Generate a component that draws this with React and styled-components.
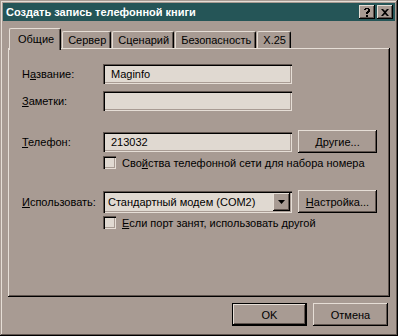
import React from 'react'
import styled, { createGlobalStyle, css } from 'styled-components'

const FACE = '#a89b93'
const LIGHT = '#e6ded6'
const SHADOW = '#5f544e'
const FIELD = '#e0d9d1'

const Global = createGlobalStyle`
  html, body {
    margin: 0;
    padding: 0;
    background: ${FACE};
  }
  body {
    font-family: "Liberation Sans", Arial, sans-serif;
    font-size: 11px;
    color: #000;
  }
`

const raised = css`
  box-shadow: inset -1px -1px #000, inset 1px 1px ${LIGHT},
    inset -2px -2px ${SHADOW}, inset 2px 2px ${FACE};
`

const sunken = css`
  box-shadow: inset 1px 1px ${SHADOW}, inset 2px 2px #000,
    inset -1px -1px ${LIGHT}, inset -2px -2px ${FACE};
`

const Window = styled.div`
  width: 398px;
  height: 336px;
  box-sizing: border-box;
  padding: 3px;
  background: ${FACE};
  box-shadow: inset -1px -1px #000, inset 1px 1px ${FACE},
    inset -2px -2px ${SHADOW}, inset 2px 2px ${LIGHT};
  display: flex;
  flex-direction: column;
`

const TitleBar = styled.div`
  height: 18px;
  background: #255557;
  display: flex;
  align-items: center;
  padding: 0 2px 0 3px;
  color: #fff;
  font-weight: bold;
  font-size: 11px;
`

const Title = styled.div`
  flex: 1;
`

const CapButton = styled.div`
  width: 16px;
  height: 14px;
  box-sizing: border-box;
  ${raised};
  background: ${FACE};
  color: #000;
  display: flex;
  align-items: center;
  justify-content: center;
  margin-left: ${(p) => (p.$gap ? '2px' : '0')};
`

const Body = styled.div`
  flex: 1;
  display: flex;
  flex-direction: column;
  padding: 6px 5px 0 5px;
`

const Tabs = styled.div`
  display: flex;
  align-items: flex-end;
  height: 21px;
  padding-left: 1px;
`

const Tab = styled.div`
  position: relative;
  box-sizing: border-box;
  height: ${(p) => (p.$active ? '22px' : '17px')};
  margin-bottom: ${(p) => (p.$active ? '-2px' : '0')};
  z-index: ${(p) => (p.$active ? 2 : 1)};
  padding: ${(p) => (p.$active ? '4px 6px 0 8px' : '2px 4px 0 5px')};
  margin-left: ${(p) => (p.$first ? '0' : '1px')};
  background: ${FACE};
  border-top: 1px solid ${LIGHT};
  border-left: 1px solid ${LIGHT};
  border-right: 1px solid #000;
  border-top-left-radius: 2px;
  border-top-right-radius: 2px;
  box-shadow: inset -1px 0 ${SHADOW};
  white-space: nowrap;
`

const Panel = styled.div`
  height: 249px;
  box-sizing: border-box;
  ${raised};
  padding: 16px 0 0 14px;
  display: flex;
  flex-direction: column;
`

const Row = styled.div`
  display: flex;
  align-items: center;
  margin-top: ${(p) => p.$top || 0}px;
`

const Label = styled.div`
  width: 81px;
  flex: none;
`

const Field = styled.div`
  width: 189px;
  height: 20px;
  box-sizing: border-box;
  background: ${FIELD};
  ${sunken};
  padding: 4px 0 0 8px;
`

const Select = styled(Field)`
  height: 22px;
  display: flex;
  align-items: center;
  padding: 0 2px 0 5px;
  justify-content: space-between;
`

const DropButton = styled.div`
  width: 17px;
  height: 18px;
  box-sizing: border-box;
  background: ${FACE};
  ${raised};
  display: flex;
  align-items: center;
  justify-content: center;
`

const Button = styled.div`
  width: ${(p) => p.$width || 79}px;
  height: 23px;
  box-sizing: border-box;
  background: ${FACE};
  ${raised};
  display: flex;
  align-items: center;
  justify-content: center;
  margin-left: ${(p) => p.$left || 0}px;
  ${(p) =>
    p.$default &&
    css`
      border: 1px solid #000;
    `}
`

const CheckRow = styled.div`
  display: flex;
  align-items: center;
  margin-left: 81px;
  margin-top: ${(p) => p.$top || 0}px;
`

const Check = styled.div`
  width: 13px;
  height: 13px;
  box-sizing: border-box;
  background: ${FIELD};
  ${sunken};
  margin-right: 6px;
`

const Footer = styled.div`
  display: flex;
  justify-content: flex-end;
  padding: 6px 2px 0 0;
  gap: 6px;
`

const Key = styled.span`
  text-decoration: underline;
`

export default function App() {
  return (
    <>
      <Global />
      <Window>
        <TitleBar>
          <Title>Создать запись телефонной книги</Title>
          <CapButton>
            <svg width="8" height="9" viewBox="0 0 8 9">
              <path d="M1 1h1V0h4v1h1v3H6v1H5v1H3V4h1V3h1V1H3v1H1z M3 7h2v2H3z" fill="#000" />
            </svg>
          </CapButton>
          <CapButton $gap>
            <svg width="8" height="7" viewBox="0 0 8 7">
              <path d="M0 0h2l2 2 2-2h2L5 3.5 8 7H6L4 5 2 7H0l3-3.5z" fill="#000" />
            </svg>
          </CapButton>
        </TitleBar>
        <Body>
          <Tabs>
            <Tab $active $first>Общие</Tab>
            <Tab>Сервер</Tab>
            <Tab>Сценарий</Tab>
            <Tab>Безопасность</Tab>
            <Tab>X.25</Tab>
          </Tabs>
          <Panel>
            <Row>
              <Label>
                Н<Key>а</Key>звание:
              </Label>
              <Field>Maginfo</Field>
            </Row>
            <Row $top={7}>
              <Label>
                <Key>З</Key>аметки:
              </Label>
              <Field />
            </Row>
            <Row $top={19}>
              <Label>
                <Key>Т</Key>елефон:
              </Label>
              <Field>213032</Field>
              <Button $left={6}>
                <span>
                  <Key>Д</Key>ругие...
                </span>
              </Button>
            </Row>
            <CheckRow $top={3}>
              <Check />
              <span>
                Сво<Key>й</Key>ства телефонной сети для набора номера
              </span>
            </CheckRow>
            <Row $top={21}>
              <Label>
                <Key>И</Key>спользовать:
              </Label>
              <Select>
                <span>Стандартный модем (COM2)</span>
                <DropButton>
                  <svg width="7" height="4" viewBox="0 0 7 4">
                    <path d="M0 0h7L3.5 4z" fill="#000" />
                  </svg>
                </DropButton>
              </Select>
              <Button $left={6}>
                <span>
                  <Key>Н</Key>астройка...
                </span>
              </Button>
            </Row>
            <CheckRow $top={3}>
              <Check />
              <span>
                <Key>Е</Key>сли порт занят, использовать другой
              </span>
            </CheckRow>
          </Panel>
          <Footer>
            <Button $default $width={75}>OK</Button>
            <Button $width={75}>Отмена</Button>
          </Footer>
        </Body>
      </Window>
    </>
  )
}
